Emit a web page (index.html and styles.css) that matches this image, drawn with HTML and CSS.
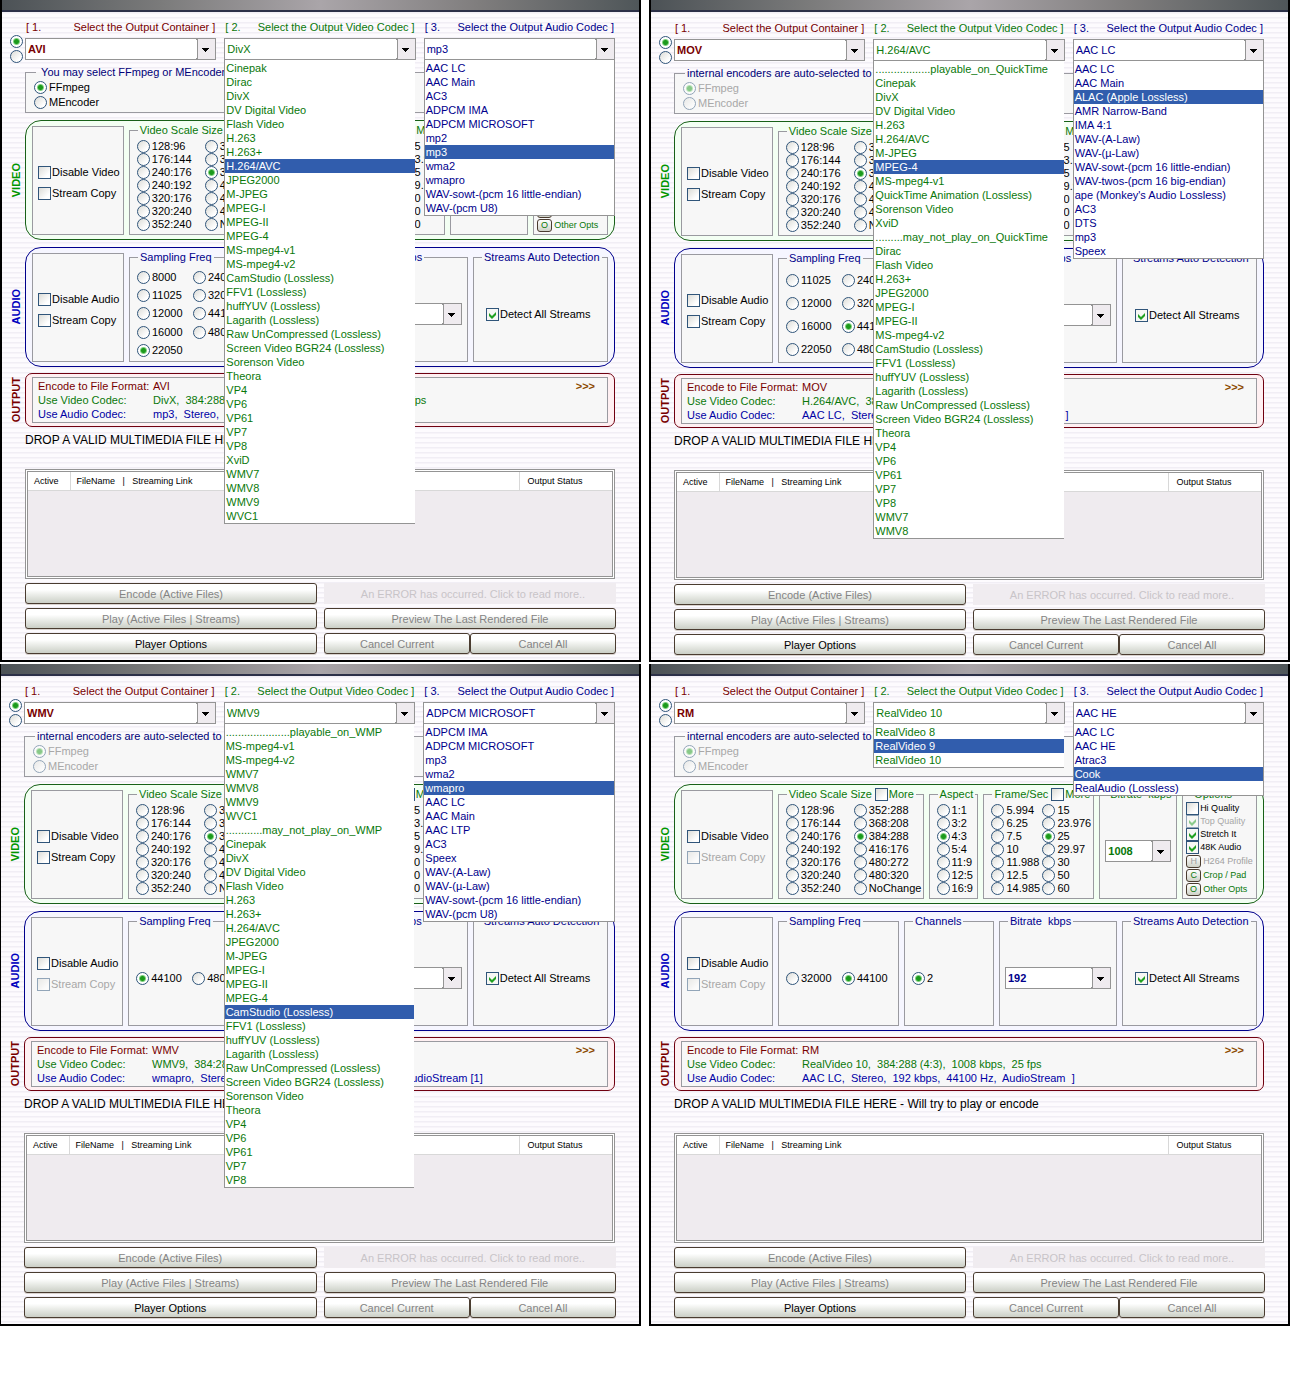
FILE: index.html
```html
<!DOCTYPE html>
<html lang="en">
<head>
<meta charset="utf-8">
<title>Output container and codec selection</title>
<link rel="stylesheet" href="styles.css">
</head>
<body>
<main class="windows" id="windows"></main>
<script src="app.js"></script>
</body>
</html>
```
FILE: styles.css
```css
* { box-sizing: border-box; }

body {
  margin: 0;
  background: #fff;
  font: 11px/14px "Liberation Sans", Arial, sans-serif;
  color: #000;
}

.windows {
  display: grid;
  grid-template-columns: minmax(0, 1fr) minmax(0, 1fr);
  gap: 2px 8px;
}

/* window frame */
.window {
  border: solid #000;
  border-width: 0 2px 2px;
  background: repeating-linear-gradient(#fdfbfe 0 2px, #f1eef5 2px 3px, #f7f4f9 3px 4px, #fdfbfe 4px 5px);
}
.window.thin { border-left-width: 1px; }
.titlebar {
  height: 12px;
  border-bottom: 2px solid #2c3048;
  background: linear-gradient(90deg, #4c5256, #7b7b7b 25%, #aaa5a9 50%, #7f7d7d 75%, #4f5659);
}
.body { padding: 8px 24px 6px 8px; }
.low .body { padding: 9px 24px 5px 8px; }

.row {
  display: grid;
  grid-template-columns: 13px minmax(0, 1fr);
  column-gap: 2px;
}
.row + .row { margin-top: 7px; }
.row.top + .row { margin-top: 3px; }
.row.output { margin-top: 6px; }
.side { place-self: center; display: flex; }
.side-label {
  writing-mode: vertical-rl;
  transform: rotate(180deg);
  font-weight: bold;
  line-height: 13px;
}
.side-label.green { color: #009600; }
.side-label.blue { color: #0000be; }

.maroon { color: #780000; }
.green { color: #0a780a; }
.blue { color: #00008c; }

/* the three drop-downs at the top */
.mode { display: grid; gap: 2px; padding-top: 15px; align-content: start; }
.pickers { display: grid; grid-template-columns: repeat(3, minmax(0, 1fr)); gap: 8px; height: 40px; }
.picker { position: relative; display: grid; gap: 4px; }
.picker-head { display: flex; justify-content: space-between; padding: 0 1px; white-space: nowrap; }
.combo {
  appearance: none;
  width: 100%;
  height: 22px;
  margin: 0;
  padding: 0 24px 0 2px;
  border: 1px solid #949494;
  border-radius: 0;
  font: inherit;
  color: inherit;
  background:
    url("data:image/svg+xml,%3Csvg xmlns='http://www.w3.org/2000/svg' width='19' height='20'%3E%3Cpath d='M0 0h19v20H0z' fill='%23949494'/%3E%3Cpath d='M0 1h1v18H0z' fill='%23fff'/%3E%3Cpath d='M2 0h17v20H2z' fill='%23efebef'/%3E%3Cpath d='M6 9h7v1h-1v1h-1v1h-1v1H9v-1H8v-1H7v-1H6z'/%3E%3C/svg%3E") right center no-repeat #fff;
}
.combo.strong { font-weight: bold; }
.options {
  position: absolute;
  z-index: 2;
  top: 100%;
  left: 0;
  right: 0;
  margin: 0;
  padding: 1px 0 0;
  list-style: none;
  border: solid #949494;
  border-width: 0 1px 1px;
  background: #fff;
  white-space: nowrap;
}
.options.green { border-right: 0; right: 1px; }
.options li { padding: 0 1px; height: 14px; }
.options .chosen { background: #315dad; color: #fff; }

/* framed groups */
fieldset, .box {
  min-width: 0;
  margin: 0;
  padding: 0 0 0 7px;
  border: 1px solid #9a9aa0;
  background: #f7f7f7;
}
legend {
  display: flex;
  align-items: center;
  margin: 0 0 0 1px;
  padding: 0 2px;
  line-height: 13px;
  height: 13px;
  white-space: nowrap;
}
.encoder { height: 47px; padding: 2px 0 0 8px; }
.encoder legend { margin-left: 2px; color: #000078; }
.encoder .choice + .choice { margin-top: 2px; }

.choice {
  display: flex;
  align-items: center;
  gap: 2px;
  height: 13px;
  line-height: 13px;
  white-space: nowrap;
}
.choice.off { color: #a8a8a8; }
.choice.tick { gap: 1px; }
legend .choice { margin-left: 3px; }

input[type="radio"], input[type="checkbox"] {
  appearance: none;
  flex: none;
  width: 13px;
  height: 13px;
  margin: 0;
  border: 1px solid #30557a;
  background: linear-gradient(135deg, #dcdcd7, #fff 75%);
}
input[type="radio"] { border-radius: 50%; }
input[type="radio"]:checked {
  background: radial-gradient(circle, #1c9a1c 0 2px, #7fd07f 3px, #fff 4px);
}
input[type="checkbox"]:checked {
  background: url("data:image/svg+xml,%3Csvg xmlns='http://www.w3.org/2000/svg' width='11' height='11'%3E%3Cpath d='M2 4l3 3 4-4v3L5 10 2 7z' fill='%2321a121'/%3E%3C/svg%3E") #f7f7f4;
}
input:disabled { opacity: .5; }

.group {
  display: grid;
  gap: 5px;
  height: 120px;
  padding: 3px 6px 4px;
  border: 1px solid currentColor;
  border-radius: 16px;
}
.group > * { color: #000; }
.group.green { grid-template-columns: 92fr 146fr 50fr 111fr 78fr 75fr; border-color: #186118; background: #f3fff3; }
.group.blue { grid-template-columns: 92fr 121fr 90fr 118fr 135fr; background: #f6f6ff; }
.group.green legend { color: #0a780a; }
.group.blue legend { color: #00008c; }
.group .box {
  display: grid;
  align-content: center;
  gap: 8px;
  margin-top: 2px;
  padding: 4px 0 0 5px;
}

.columns { display: grid; grid-auto-flow: column; justify-content: start; padding-top: 3px; }
.scale { grid-template: repeat(7, 13px) / 68px auto; }
.aspect { grid-template: repeat(7, 13px) / auto; }
.rate { grid-template: repeat(7, 13px) / 51px auto; }
.freq { height: 96px; padding-top: 4px; grid-auto-rows: 1fr; align-items: center; grid-template-columns: 56px auto; }
.freq.rows5 { grid-template-rows: repeat(5, 1fr); }
.freq.rows4 { grid-template-rows: repeat(4, 1fr); }
.freq.rows1 { grid-template-rows: 1fr; }
.middle { display: grid; align-items: center; height: 96px; padding: 4px 5px 0 0; }
.narrow { padding-left: 5px; }
.narrow legend { margin-left: 3px; }
.streams { padding-left: 12px; }
.streams legend { margin-left: -4px; }

.extras { padding: 1px 0 0 3px; font-size: 9px; }
.extras legend { font-size: 11px; margin-left: 6px; }
.opt-button { height: 14px; color: #0a780a; }
.opt-button button {
  width: 15px;
  height: 13px;
  padding: 0;
  border: 1px solid #4a3c30;
  border-radius: 3px;
  background: linear-gradient(#fff, #cfd2c8);
  font: 9px/11px "Liberation Sans", Arial, sans-serif;
  color: #0a780a;
}
.opt-button.off, .opt-button button:disabled { color: #a0a0a0; }

/* summary of the chosen output */
.summary {
  padding: 3px 6px;
  height: 54px;
  border: 1px solid #700010;
  border-radius: 7px;
  background: #fff0f2;
}
.summary .box { display: flex; justify-content: space-between; height: 46px; padding: 1px 12px 0 5px; }
.summary dl { flex: 1; display: grid; grid-template-columns: 115px minmax(0, 1fr); align-content: start; margin: 0; white-space: pre; }
.summary dt, .summary dd { margin: 0; height: 14px; }
.summary dl .blue { color: #0000a5; }
.more { color: #8c4a00; font-weight: bold; text-decoration: none; }

.drop { margin: 5px 0 21px 15px; font-size: 12px; line-height: 16px; white-space: nowrap; }

/* file list */
.files {
  height: 110px;
  margin-left: 15px;
  padding: 1px;
  border: 1px solid #949494;
  background: #fff;
}
.files-inner { height: 100%; border: 1px solid #949494; background: #efebef; }
.files table { width: 100%; border-collapse: collapse; table-layout: fixed; font-size: 9px; line-height: 18px; }
.files th {
  padding: 0 0 0 6px;
  border-right: 1px solid #d8d8d8;
  border-bottom: 1px solid #d8d8d8;
  background: #fff;
  font-weight: normal;
  text-align: left;
  white-space: pre;
}
.files th:last-child { border-right: 0; padding-left: 8px; }
.files .c-active { width: 42px; }
.files .c-status { width: 93px; }

.actions { display: grid; grid-template-columns: 1fr 1fr; gap: 4px 7px; margin: 4px -1px 0 15px; }
.actions button {
  height: 21px;
  padding: 0;
  border: 1px solid #4a3c30;
  border-radius: 3px;
  background: linear-gradient(#fff 30%, #eceeea 55%, #cbcfc6);
  box-shadow: 0 1px #d9d3cf;
  font: inherit;
  color: #000;
}
.actions button:disabled { color: #848484; }
.actions .error { padding-left: 6px; border: 0; border-radius: 0; background: #f0ecf0; box-shadow: none; }
.actions .error:disabled { color: #c8c4c8; }
.pair { display: grid; grid-template-columns: 1fr 1fr; }
```
FILE: app.js
```js
const LOSSLESS = ["CamStudio (Lossless)", "FFV1 (Lossless)", "huffYUV (Lossless)", "Lagarith (Lossless)",
  "Raw UnCompressed (Lossless)", "Screen Video BGR24 (Lossless)"];

const windows = [
  {
    id: "avi", container: "AVI", video: "DivX", audio: "mp3", encoderOpen: true,
    videoList: ["Cinepak", "Dirac", "DivX", "DV Digital Video", "Flash Video", "H.263", "H.263+", "*H.264/AVC",
      "JPEG2000", "M-JPEG", "MPEG-I", "MPEG-II", "MPEG-4", "MS-mpeg4-v1", "MS-mpeg4-v2", ...LOSSLESS,
      "Sorenson Video", "Theora", "VP4", "VP6", "VP61", "VP7", "VP8", "XviD", "WMV7", "WMV8", "WMV9", "WVC1"],
    audioList: ["AAC LC", "AAC Main", "AC3", "ADPCM IMA", "ADPCM MICROSOFT", "mp2", "*mp3", "wma2", "wmapro",
      "WAV-sowt-(pcm 16 little-endian)", "WAV-(pcm U8)"],
    freqs: ["8000", "11025", "12000", "16000", "22050", "24000", "32000", "44100", "48000"], freq: "22050", rows: 5,
    videoOut: "DivX,  384:288 (4:3),  1008 kbps,  normal bitrate,  25 fps",
    audioOut: "mp3,  Stereo,  96 kbps,  22050 Hz"
  },
  {
    id: "mov", frame: "low", container: "MOV", video: "H.264/AVC", audio: "AAC LC",
    videoList: ["..................playable_on_QuickTime", "Cinepak", "DivX", "DV Digital Video", "H.263", "H.264/AVC",
      "M-JPEG", "*MPEG-4", "MS-mpeg4-v1", "QuickTime Animation (Lossless)", "Sorenson Video", "XviD",
      ".........may_not_play_on_QuickTime", "Dirac", "Flash Video", "H.263+", "JPEG2000", "MPEG-I", "MPEG-II",
      "MS-mpeg4-v2", ...LOSSLESS, "Theora", "VP4", "VP6", "VP61", "VP7", "VP8", "WMV7", "WMV8"],
    audioList: ["AAC LC", "AAC Main", "*ALAC (Apple Lossless)", "AMR Narrow-Band", "IMA 4:1", "WAV-(A-Law)",
      "WAV-(µ-Law)", "WAV-sowt-(pcm 16 little-endian)", "WAV-twos-(pcm 16 big-endian)",
      "ape (Monkey's Audio Lossless)", "AC3", "DTS", "mp3", "Speex"],
    freqs: ["11025", "12000", "16000", "22050", "24000", "32000", "44100", "48000"], freq: "44100", rows: 4,
    videoOut: "H.264/AVC,  384:288 (4:3),  25 fps",
    audioOut: "AAC LC,  Stereo,  96 kbps,  44100 Hz,  AudioStream  ]"
  },
  {
    id: "wmv", frame: "thin", container: "WMV", video: "WMV9", audio: "ADPCM MICROSOFT", audioCopyOff: true,
    videoList: [".....................playable_on_WMP", "MS-mpeg4-v1", "MS-mpeg4-v2", "WMV7", "WMV8", "WMV9", "WVC1",
      "............may_not_play_on_WMP", "Cinepak", "DivX", "DV Digital Video", "Flash Video", "H.263", "H.263+",
      "H.264/AVC", "JPEG2000", "M-JPEG", "MPEG-I", "MPEG-II", "MPEG-4", "*CamStudio (Lossless)",
      ...LOSSLESS.slice(1), "Sorenson Video", "Theora", "VP4", "VP6", "VP61", "VP7", "VP8"],
    audioList: ["ADPCM IMA", "ADPCM MICROSOFT", "mp3", "wma2", "*wmapro", "AAC LC", "AAC Main", "AAC LTP", "AC3",
      "Speex", "WAV-(A-Law)", "WAV-(µ-Law)", "WAV-sowt-(pcm 16 little-endian)", "WAV-(pcm U8)"],
    freqs: ["44100", "48000"], freq: "44100", rows: 1,
    videoOut: "WMV9,  384:288 (4:3),  25 fps",
    audioOut: "wmapro,  Stereo,  192 kbps,  44100 Hz,  Quality 5,  AudioStream [1]"
  },
  {
    id: "rm", container: "RM", video: "RealVideo 10", audio: "AAC HE", audioCopyOff: true, videoCopyOff: true,
    videoList: ["RealVideo 8", "*RealVideo 9", "RealVideo 10"],
    audioList: ["AAC LC", "AAC HE", "Atrac3", "*Cook", "RealAudio (Lossless)"],
    freqs: ["32000", "44100"], freq: "44100", rows: 1,
    videoOut: "RealVideo 10,  384:288 (4:3),  1008 kbps,  25 fps",
    audioOut: "AAC LC,  Stereo,  192 kbps,  44100 Hz,  AudioStream  ]"
  }
];

const radio = (name, label, on, off) =>
  `<label class="choice${off ? " off" : ""}"><input type="radio" name="${name}"${on ? " checked" : ""}${off ? " disabled" : ""}>${label}</label>`;
const radios = (name, labels, chosen, off) => labels.map(l => radio(name, l, l === chosen, off)).join("");
const tick = (label, on, off) =>
  `<label class="choice tick${off ? " off" : ""}"><input type="checkbox"${on ? " checked" : ""}${off ? " disabled" : ""}>${label}</label>`;
const combo = (value, label, cls = "") =>
  `<select class="combo ${cls}" aria-label="${label}"><option>${value}</option></select>`;
const optButton = (key, label, off) =>
  `<label class="choice opt-button${off ? " off" : ""}"><button type="button"${off ? " disabled" : ""}>${key}</button>${label}</label>`;
const list = (items, color) =>
  `<ul class="options ${color}" role="listbox">${items.map(i => i[0] === "*"
    ? `<li class="chosen" role="option" aria-selected="true">${i.slice(1)}</li>`
    : `<li role="option">${i}</li>`).join("")}</ul>`;
const picker = (n, what, color, value, items) => `
  <div class="picker ${color}">
    <div class="picker-head"><span>[ ${n}.</span><span>Select the Output ${what} ]</span></div>
    ${combo(value, what, n === 1 ? "strong" : "")}
    ${items ? list(items, color) : ""}
  </div>`;

const view = w => `
<section class="window ${w.frame || ""}">
  <div class="titlebar"></div>
  <div class="body">
    <div class="row top">
      <div class="mode">
        <input type="radio" name="${w.id}-mode" aria-label="Single output" checked>
        <input type="radio" name="${w.id}-mode" aria-label="Alternate output">
      </div>
      <div class="pickers">
        ${picker(1, "Container", "maroon", w.container)}
        ${picker(2, "Video Codec", "green", w.video, w.videoList)}
        ${picker(3, "Audio Codec", "blue", w.audio, w.audioList)}
      </div>
    </div>
    <div class="row">
      <div></div>
      <fieldset class="encoder">
        <legend>${w.encoderOpen ? "&nbsp;You may select FFmpeg or MEncoder" : "internal encoders are auto-selected to"}</legend>
        ${radios(w.id + "-encoder", ["FFmpeg", "MEncoder"], "FFmpeg", !w.encoderOpen)}
      </fieldset>
    </div>
    <div class="row">
      <div class="side"><span class="side-label green">VIDEO</span></div>
      <div class="group green">
        <div class="box">${tick("Disable Video")}${tick("Stream Copy", false, w.videoCopyOff)}</div>
        <fieldset><legend>Video Scale Size ${tick("More")}</legend>
          <div class="columns scale">${radios(w.id + "-scale", ["128:96", "176:144", "240:176", "240:192", "320:176", "320:240", "352:240",
            "352:288", "368:208", "384:288", "416:176", "480:272", "480:320", "NoChange"], "384:288")}</div></fieldset>
        <fieldset><legend>Aspect</legend>
          <div class="columns aspect">${radios(w.id + "-aspect", ["1:1", "3:2", "4:3", "5:4", "11:9", "12:5", "16:9"], "4:3")}</div></fieldset>
        <fieldset><legend>Frame/Sec ${tick("More")}</legend>
          <div class="columns rate">${radios(w.id + "-rate", ["5.994", "6.25", "7.5", "10", "11.988", "12.5", "14.985",
            "15", "23.976", "25", "29.97", "30", "50", "60"], "25")}</div></fieldset>
        <fieldset class="narrow"><legend>Bitrate&nbsp; kbps</legend>
          <div class="middle green">${combo("1008", "Video bitrate", "strong")}</div></fieldset>
        <fieldset class="extras"><legend>Options</legend>
          ${tick("Hi Quality")}${tick("Top Quality", true, true)}${tick("Stretch It", true)}${tick("48K Audio", true)}
          ${optButton("H", "H264 Profile", true)}${optButton("C", "Crop / Pad")}${optButton("O", "Other Opts")}</fieldset>
      </div>
    </div>
    <div class="row">
      <div class="side"><span class="side-label blue">AUDIO</span></div>
      <div class="group blue">
        <div class="box">${tick("Disable Audio")}${tick("Stream Copy", false, w.audioCopyOff)}</div>
        <fieldset><legend>Sampling Freq</legend>
          <div class="columns freq rows${w.rows}">${radios(w.id + "-freq", w.freqs, w.freq)}</div></fieldset>
        <fieldset><legend>Channels</legend>
          <div class="middle">${radio(w.id + "-channels", "2", true)}</div></fieldset>
        <fieldset class="narrow"><legend>Bitrate&nbsp; kbps</legend>
          <div class="middle blue">${combo("192", "Audio bitrate", "strong")}</div></fieldset>
        <fieldset class="streams"><legend>Streams Auto Detection</legend>
          <div class="middle">${tick("Detect All Streams", true)}</div></fieldset>
      </div>
    </div>
    <div class="row output">
      <div class="side"><span class="side-label maroon">OUTPUT</span></div>
      <div class="summary">
        <div class="box">
          <dl>
            <dt class="maroon">Encode to File Format:</dt><dd class="maroon">${w.container}</dd>
            <dt class="green">Use Video Codec:</dt><dd class="green">${w.videoOut}</dd>
            <dt class="blue">Use Audio Codec:</dt><dd class="blue">${w.audioOut}</dd>
          </dl>
          <a class="more" href="#${w.id}">&gt;&gt;&gt;</a>
        </div>
      </div>
    </div>
    <p class="drop">DROP A VALID MULTIMEDIA FILE HERE - Will try to play or encode</p>
    <div class="files"><div class="files-inner">
      <table>
        <thead><tr><th class="c-active">Active</th><th>FileName   |   Streaming Link</th><th class="c-status">Output Status</th></tr></thead>
        <tbody></tbody>
      </table>
    </div></div>
    <div class="actions">
      <button type="button" disabled>Encode (Active Files)</button>
      <button type="button" class="error" disabled>An ERROR has occurred. Click to read more..</button>
      <button type="button" disabled>Play (Active Files | Streams)</button>
      <button type="button" disabled>Preview The Last Rendered File</button>
      <button type="button">Player Options</button>
      <div class="pair">
        <button type="button" disabled>Cancel Current</button>
        <button type="button" disabled>Cancel All</button>
      </div>
    </div>
  </div>
</section>`;

document.getElementById("windows").innerHTML = windows.map(view).join("");
```
